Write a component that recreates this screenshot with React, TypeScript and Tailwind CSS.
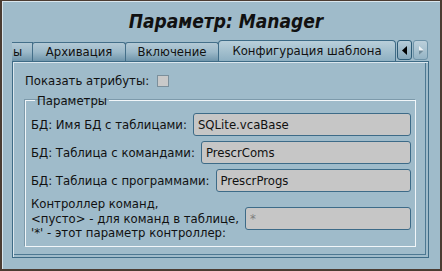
import React from "react";

const font = { fontFamily: '"DejaVu Sans Condensed", "DejaVu Sans", sans-serif' };

function Tab({ w, children, active = false }: { w: string; children: React.ReactNode; active?: boolean }) {
  return (
    <div
      className={
        active
          ? `${w} h-[21px] flex items-center justify-center border border-b-0 border-[#3f6c87] rounded-t-[4px] bg-gradient-to-b from-[#b9cfda] to-[#8eb0c2] text-[13px] text-[#111] relative -mr-[1px]`
          : `${w} h-[19px] mt-[2px] flex items-center justify-center border border-b-0 border-[#446f89] rounded-t-[3px] bg-gradient-to-b from-[#b3c9d5] via-[#9cb9c9] to-[#6f95ab] text-[13px] text-[#111] -mr-[1px]`
      }
    >
      {children}
    </div>
  );
}

function Row({ label, value, gray = false, multi = false }: { label: React.ReactNode; value: string; gray?: boolean; multi?: boolean }) {
  return (
    <div className="flex items-center gap-[6px]">
      <div className={multi ? "text-[13px] leading-[14.5px] text-[#111] whitespace-nowrap" : "text-[13px] text-[#111] whitespace-nowrap"}>
        {label}
      </div>
      <div
        className={`flex-1 h-[23px] flex items-center px-[4px] bg-[#c6c6c6] border border-[#3d6b88] rounded-[3px] text-[13px] ${
          gray ? "text-[#7d7d7d]" : "text-[#111]"
        }`}
      >
        {value}
      </div>
    </div>
  );
}

export default function App() {
  return (
    <div className="w-[442px] h-[271px] bg-[#4b3c32] pl-[2px] pr-[2px] pt-[1px] pb-[2px]" style={font}>
      <div className="w-full h-full bg-[#9fbbca] border-l border-t border-[#d9e6ed] flex flex-col">
        <div className="h-[38px] flex items-center justify-center pt-[1px] pl-[9px]">
          <span className="text-[19px] font-bold italic text-[#111]">Параметр: Manager</span>
        </div>
        <div className="flex ml-[9px] h-[21px] items-start">
          <div className="w-[21px] h-[19px] mt-[2px] border-t border-r border-[#446f89] bg-gradient-to-b from-[#b3c9d5] via-[#9cb9c9] to-[#6f95ab] overflow-hidden flex items-center text-[13px] text-[#111] -mr-[1px]">
            <span className="pl-[1px]">ы</span>
          </div>
          <Tab w="w-[94px]">Архивация</Tab>
          <Tab w="w-[94px]">Включение</Tab>
          <Tab w="w-[178px]" active>
            Конфигурация шаблона
          </Tab>
          <div className="ml-[2px] w-[15px] h-[20px] border border-[#2f5d78] rounded-[3px] bg-gradient-to-b from-[#b6ccd8] to-[#86a8bb] flex items-center justify-center">
            <svg width="6" height="9" viewBox="0 0 6 9">
              <path d="M5 0 L0 4.5 L5 9 Z" fill="#000" />
            </svg>
          </div>
          <div className="ml-[1px] w-[15px] h-[20px] border border-[#6e93a8] rounded-[3px] bg-gradient-to-b from-[#bcd0db] to-[#95b4c5] flex items-center justify-center">
            <svg width="6" height="9" viewBox="0 0 6 9">
              <path d="M1 0 L6 4.5 L1 9 Z" fill="#eef3f6" />
              <path d="M1 4.5 L6 4.5 L1 9 Z" fill="#6f8c9c" />
            </svg>
          </div>
        </div>
        <div className="ml-[9px] w-[417px] h-[197px] border border-[#3e6b86] shadow-[inset_1px_1px_0_#dbe7ee,inset_-2px_-2px_0_#9fbbca,inset_-3px_-3px_0_#4d7892] pt-[12px] pl-[12px] pr-[12px]">
          <div className="flex items-center h-[14px] gap-[8px]">
            <span className="text-[13px] text-[#111]">Показать атрибуты:</span>
            <div className="w-[12px] h-[12px] bg-[#c9c9c9] border border-[#7b8f9b]" />
          </div>
          <fieldset className="mt-[5px] h-[154px] border border-[#f1f6f9] shadow-[-1px_-1px_0_#7d9aab] pl-[5px] pr-[4px] pt-[5px]">
            <legend className="ml-[4px] px-[2px] text-[13px] leading-[15px] text-[#111]">Параметры</legend>
            <div className="flex flex-col gap-[5px]">
              <Row label="БД: Имя БД с таблицами:" value="SQLite.vcaBase" />
              <Row label="БД: Таблица с командами:" value="PrescrComs" />
              <Row label="БД: Таблица с программами:" value="PrescrProgs" />
              <Row
                multi
                gray
                value="*"
                label={
                  <>
                    <div>Контроллер команд,</div>
                    <div>{"<пусто> - для команд в таблице,"}</div>
                    <div>{"'*' - этот параметр контроллер:"}</div>
                  </>
                }
              />
            </div>
          </fieldset>
        </div>
      </div>
    </div>
  );
}
